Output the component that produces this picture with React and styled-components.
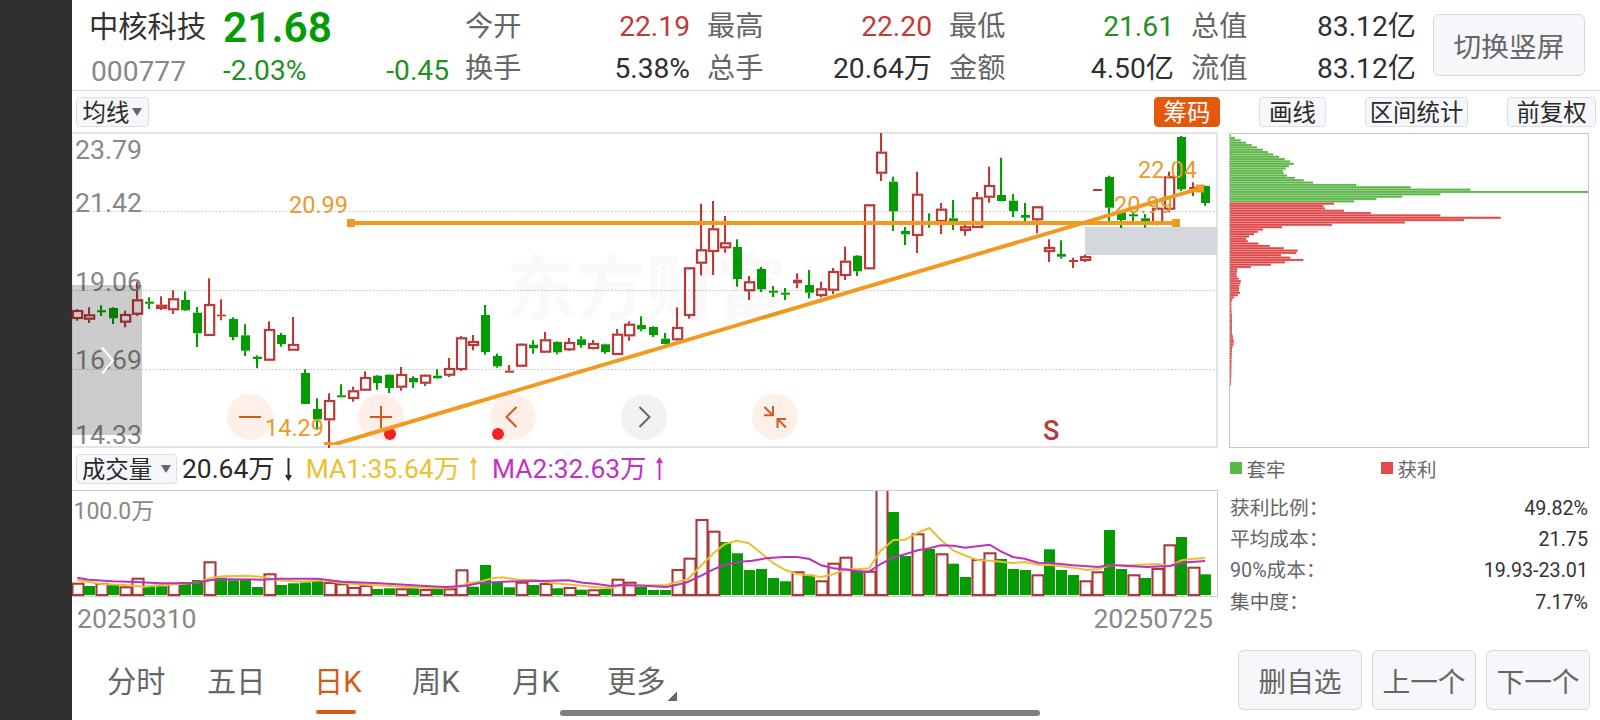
import React from "react";
import styled, { createGlobalStyle } from "styled-components";

const RED = "#b93a37";
const GREEN = "#049b04";
const ORANGE = "#f19a1f";
const STEP = 12;
const FIRST = 5;

// colour, high, body top, body bottom, low
const candles = [
  ["r", 177, 178, 187, 188.7], ["r", 175.3, 182.3, 187.7, 191], ["g", 173.3, 178.3, 180.3, 184],
  ["g", 175.3, 176, 186.3, 192], ["r", 178.7, 182, 190.7, 195.3], ["r", 150, 167.3, 182.7, 184],
  ["g", 165.3, 169.7, 171.7, 177], ["r", 164.3, 172.7, 177, 178], ["r", 158.3, 166.3, 178.3, 182],
  ["g", 159.3, 168, 178.3, 179], ["g", 175, 180.7, 201.3, 215], ["r", 146.3, 172, 204, 204],
  ["r", 167.3, 182.7, 184.3, 188.3], ["g", 185.3, 187, 205, 208.3], ["g", 192.3, 203.3, 218.7, 224],
  ["g", 223.3, 224.7, 227, 236.3], ["r", 189.3, 197, 228.7, 228.7], ["g", 201, 203, 212, 214.7],
  ["r", 185, 212, 218.7, 218.7], ["g", 237.3, 241, 272, 272], ["g", 266.3, 277, 287.3, 298],
  ["r", 261.3, 268, 288.3, 316], ["g", 252.3, 263.3, 265.3, 265.3], ["r", 254.7, 258.3, 267, 269.7],
  ["r", 239.3, 245, 258.7, 258.7], ["g", 243, 243.7, 251, 257.7], ["g", 242.3, 242.7, 256, 261],
  ["r", 235, 242, 255.7, 258.7], ["g", 244.3, 246, 250.3, 256], ["r", 242.3, 242.7, 251.7, 254],
  ["g", 237.3, 243.7, 246.3, 246.7], ["r", 226, 236, 243.7, 245], ["r", 204, 205.3, 238, 239],
  ["r", 203, 209, 214, 218.3], ["g", 173, 183, 220, 222.7], ["g", 221.7, 224, 234.3, 235.7],
  ["r", 233, 238.7, 240.7, 240.7], ["r", 211.3, 211.7, 234.7, 235], ["g", 208.3, 212.7, 216.3, 221.7],
  ["r", 200, 207.3, 220.7, 221], ["g", 209.3, 210, 220.3, 222.3], ["r", 206, 210, 218.3, 219],
  ["g", 204.3, 207.3, 213, 215.7], ["r", 208, 211, 217, 217.3], ["g", 211.7, 212.3, 220, 221.7],
  ["r", 197, 201.7, 223, 223], ["r", 189.3, 191.7, 204.3, 208.7], ["g", 184.3, 193, 197.3, 199.3],
  ["g", 194.3, 195, 203, 205], ["g", 201, 206.7, 212, 212.3], ["r", 175.3, 195, 208.3, 208.7],
  ["r", 135, 135.3, 184, 186.7], ["r", 71.7, 117.3, 131.7, 143.3], ["r", 69, 96.3, 120, 143],
  ["r", 84, 110.3, 116.3, 120.7], ["g", 107.3, 115, 147, 154.7], ["r", 144, 149.3, 159.3, 168],
  ["g", 135, 137, 157.3, 160], ["g", 154, 158.7, 160.7, 165], ["g", 156, 160.7, 162.7, 168],
  ["r", 141.3, 147.7, 151.3, 156.3], ["g", 138, 153, 160.7, 166.3], ["r", 149.7, 156.3, 164, 165.3],
  ["r", 136, 139, 158.7, 162], ["r", 114.7, 128.7, 144, 148], ["g", 123, 123.7, 139.3, 144],
  ["r", 72.3, 72.3, 137.3, 137.3], ["r", 1, 19.7, 41.7, 49], ["g", 44.7, 49.7, 79.3, 99],
  ["g", 95, 99, 102.3, 113], ["r", 39.7, 61.7, 104, 121], ["g", 81.3, 90, 92, 95.7],
  ["r", 71, 76.7, 90, 102], ["g", 68, 86.3, 91.3, 98], ["r", 89, 94.3, 99, 103.7],
  ["r", 60, 65.3, 96, 96], ["r", 34.7, 53, 65.7, 70.7], ["g", 25.7, 63, 69, 69.3],
  ["g", 62, 68.7, 79, 85], ["g", 71, 83, 85.7, 90.3], ["r", 74, 74.3, 88.3, 101.3],
  ["r", 107.3, 115, 120, 130], ["g", 108.3, 122, 124.7, 126.7], ["r", 125.7, 128, 130, 136],
  ["r", 122.7, 124, 129, 130], ["r", 57, 57, 59, 59], ["g", 43.7, 45, 75.7, 91.3],
  ["g", 79, 80.3, 88, 96], ["g", 80.3, 82.3, 84.3, 89.7], ["g", 82, 86.3, 90, 95.7],
  ["r", 73, 75.7, 92, 93.3], ["r", 39.7, 44.3, 77.7, 80.3], ["g", 4, 5, 57.3, 59],
  ["r", 50.3, 55, 57, 64], ["g", 53.7, 54, 71, 73.7],
];

const volumeColors =
  "rgrgrrggrggrggggrggg" + "grrrrggrgrgrrggggrgr" + "grgrgrrgggrrrrgggggg" +
  "rgrrrgrrggrgrggrrggg" + "rgggrrggrgrrgrg";

const volumeTops = [
  91.7, 95, 92, 93, 95.3, 86.7, 95.3, 95.3, 92, 91, 89, 70.3, 86.7, 89.3, 89, 96, 82.3, 94, 92.3, 91.3,
  90.3, 91, 92.3, 96, 94, 98, 97.3, 97.3, 97.3, 98, 98, 97.3, 78.3, 95.7, 74, 90.7, 96.3, 90.7, 94, 92,
  97.3, 96, 98.7, 98.3, 98, 87.7, 90.7, 96, 99, 99, 78, 66.7, 28, 39.7, 51, 62.3, 79, 78, 87, 90.3,
  80.3, 83.7, 89.3, 71.7, 65.7, 79.3, 79.7, -4, 21, 65, 42.3, 58, 62.3, 72.7, 86, 68, 61.3, 68, 78, 79,
  83.3, 58.3, 79, 84, 89.3, 80.3, 39, 78, 83.3, 87, 77, 53.3, 46, 75.7, 83.3,
];

const ma1 =
  "5.3,89 28.6,93 52.3,94 72,95.7 88,94 111.6,92.7 127.4,91.3 139.3,86.7 151.2,85.3 174.9,84.7 190.7,86 206.5,89.3 230.2,90.7 250,89 269.8,92 293.5,93.7 317.2,95 341,96.3 368.6,97.3 384.5,95.7 396.3,92.3 408.2,90.7 420,87.3 430,86.3 447.7,89 463.5,89 479.4,92 503,94 519,95.7 538.7,97.3 548,94.3 594.7,94 616,88 629.7,74 641.4,62.3 653,53 665,49.7 677,52.3 689.2,62.3 701.7,72.3 713.4,79 725,83 737.5,84.3 749.2,86 761.2,83.3 773.7,78.3 785.4,78.3 797,77.3 808.7,59.7 821.5,49 833.2,48.7 845.7,41.7 857.3,37 869,49 881.5,59.7 894.3,65 906,69 921.5,70 941,72 953.8,71 966,73.7 978,74 1001.3,76.7 1015,79 1025.8,78 1038.3,74.3 1061.6,74 1085.7,73 1097.8,75.3 1109.5,69.3 1122,67.7 1133.2,67";

const ma2 =
  "5.3,86.7 16.7,88.7 40.4,90.3 64.2,91 88,92.3 123.5,92 139.3,89 159,88.3 190.7,88.7 206.5,87.7 246,87.7 269.8,90.7 301.4,92 325,93.3 349,94.7 372.6,96 392.4,95 408.2,92 432,90.7 467.5,90 497,89.3 511,91.7 523,92.7 538.7,95 548,94 571.3,94.7 594.7,96 614,91.7 629.7,84.3 641.4,78.3 653,73.7 668.6,70.7 680.3,69.7 694,67.3 711.4,66 725,66 737.5,68 749.2,74.3 761.2,77.3 777.6,79 789.2,80.7 797,80.7 808.7,73 821.5,66.3 833.2,63.3 845.7,59.3 857.3,57.3 869,54.3 881.5,54.7 893,56.7 917.6,53.7 929.3,60.7 941,66 952.7,67.7 966,71.7 978,72 1001.3,74.3 1025.8,76 1038.3,74 1055.8,75 1075.2,76 1097.8,75 1109.5,71.7 1133.2,70";

const chipsAbove = [
  1, 5, 10.7, 16, 21.7, 27, 32.7, 38, 43.3, 49, 54.7, 60, 63.7, 59, 55.7, 52.7, 53.7, 57, 64.7, 73.7, 83,
  126.3, 180.7, 240.3, 358, 210.3, 172.3, 146.3, 124,
];

const chipsBelow = [
  104, 93.3, 95, 114, 141, 210.3, 270.7, 234, 175, 102, 52, 33, 27.7, 24, 19, 16, 17.7, 28.3, 39.7, 53.7,
  67.7, 66.3, 51, 60.3, 73.3, 55, 41, 21, 7.3, 7, 6.3, 7, 8.7, 10.7, 10.3, 9.3, 9, 9, 10, 7.7, 4, 2.3, 1.3,
  1.3, 1.3, 1.3, 1.5, 1.7, 2, 2, 2, 2, 2, 2, 2, 2, 2.5, 3, 3.5, 3.8, 3.5, 2.5, 2, 2, 1.8, 1.6, 1.6, 1.5, 1.5,
  1.4, 1.4, 1.3, 1.3, 1.2, 1.2, 1, 1, 1,
];

const quotes = [
  ["今开", "22.19", "#c13b38"], ["最高", "22.20", "#c13b38"], ["最低", "21.61", "#1f911f"], ["总值", "83.12亿"],
  ["换手", "5.38%"], ["总手", "20.64万"], ["金额", "4.50亿"], ["流值", "83.12亿"],
];

const stats = [
  ["获利比例：", "49.82%"],
  ["平均成本：", "21.75"],
  ["90%成本：", "19.93-23.01"],
  ["集中度：", "7.17%"],
];

const tabs = [
  ["分时", 100], ["五日", 107], ["日K", 98], ["周K", 100], ["月K", 95], ["更多", 80],
];

function Candle({ index, data }) {
  const [color, high, top, bottom, low] = data;
  const x = FIRST + index * STEP;
  const fill = color === "r" ? RED : GREEN;
  const hollow = color === "r" && bottom - top > 4;
  return (
    <g>
      {high < top && <rect x={x - 1} y={high} width="2.1" height={top - high} fill={fill} />}
      {low > bottom && <rect x={x - 1} y={bottom} width="2.1" height={low - bottom} fill={fill} />}
      {hollow ? (
        <rect x={x - 4} y={top + 1} width="9.2" height={bottom - top - 2} fill="none" stroke={fill} strokeWidth="2.2" />
      ) : (
        <rect x={x - 4} y={top} width="9" height={bottom - top} fill={fill} />
      )}
    </g>
  );
}

function VolumeBar({ index, top }) {
  const x = FIRST + index * STEP;
  if (volumeColors[index] === "g") {
    return <rect x={x - 5} y={top} width="11" height={104 - top} fill={GREEN} />;
  }
  return (
    <rect x={x - 4.5} y={top + 1} width="11" height={103 - top} fill="#fff" stroke="#a83a37" strokeWidth="2.1" />
  );
}

function PriceChart() {
  return (
    <PricePanel>
      <Controls>
        <RoundButton><svg width="46" height="46"><path d="M12 23h22" /></svg></RoundButton>
        <RoundButton><svg width="46" height="46"><path d="M12 23h22M23 12v22" /></svg></RoundButton>
        <RoundButton><svg width="46" height="46"><path d="M26.5 13L16.5 23L26.5 33" /></svg></RoundButton>
        <RoundButton $gray><svg width="46" height="46"><path d="M18.5 13L28.5 23L18.5 33" /></svg></RoundButton>
        <RoundButton>
          <svg width="46" height="46"><path d="M12.5 13L21 21.5M21 12V21.3H12M34 33.5L25.5 25M25.5 34V25H34" /></svg>
        </RoundButton>
      </Controls>
      <Canvas width="1146" height="316" viewBox="0 0 1146 316">
        <g stroke="#cfcfcf" strokeDasharray="2 1.5">
          <path d="M0 79.5H1146M0 158.5H1146M0 237.5H1146" />
        </g>
        <rect x="1013" y="95" width="132" height="28" fill="#d4d7dc" />
        {candles.map((data, i) => <Candle key={i} index={i} data={data} />)}
        <circle cx="318" cy="302" r="6" fill="#f02420" />
        <circle cx="426" cy="302" r="6" fill="#f02420" />
        <clipPath id="drawArea"><rect width="1146" height="313" /></clipPath>
        <g clipPath="url(#drawArea)" stroke={ORANGE} strokeWidth="4" fill={ORANGE}>
          <path d="M279 91H1104M256 314.2L1128 56.3" />
          <path d="M275 91h8M1100 91h8M252 314h8M1124 56.5h8" strokeWidth="8" />
        </g>
        <AxisText>
          <text x="3" y="27">23.79</text>
          <text x="3" y="80">21.42</text>
          <text x="3" y="159">19.06</text>
          <text x="3" y="237">16.69</text>
          <text x="3" y="312">14.33</text>
        </AxisText>
        <MarkText>
          <text x="217" y="81">20.99</text>
          <text x="193" y="303.7">14.29</text>
          <text x="1066" y="46">22.04</text>
          <text x="1042" y="81">20.99</text>
        </MarkText>
        <Signal x="971" y="308">S</Signal>
        <rect y="153" width="70" height="150" fill="rgba(0,0,0,.2)" />
        <path d="M30 215.5L41 228.5L30 241.5" fill="none" stroke="#fff" strokeWidth="2" />
      </Canvas>
      <Watermark>东方财富</Watermark>
    </PricePanel>
  );
}

function VolumeChart() {
  return (
    <VolumePanel>
      <svg width="1146" height="106" viewBox="0 0 1146 106">
        <VolumeLabel x="1.5" y="27.5">100.0万</VolumeLabel>
        {volumeTops.map((top, i) => <VolumeBar key={i} index={i} top={top} />)}
        <polyline points={ma1} fill="none" stroke="#e8bf35" strokeWidth="2" />
        <polyline points={ma2} fill="none" stroke="#bb32bd" strokeWidth="2" />
      </svg>
    </VolumePanel>
  );
}

function ChipChart() {
  return (
    <ChipPanel>
      <svg width="358" height="314" viewBox="0 0 358 314">
        {[...chipsAbove, ...chipsBelow].map((width, i) => (
          <g key={i} fill={i < chipsAbove.length ? "#5bb548" : "#e04848"}>
            <rect y={0.6 + i * 2.345} width={width} height="2.345" opacity="0.45" />
            <rect y={0.8 + i * 2.345} width={width} height="1.7" />
          </g>
        ))}
      </svg>
    </ChipPanel>
  );
}

function Arrow({ down }) {
  return (
    <svg width="9" height="24" viewBox="0 0 9 24">
      <path
        d={down ? "M4.5 1V22M2 18L4.5 22L7 18" : "M4.5 23V2M2 6L4.5 2L7 6"}
        fill="none"
        stroke="currentColor"
        strokeWidth="2"
      />
    </svg>
  );
}

export default function App() {
  return (
    <Screen>
      <GlobalStyle />
      <CutoutBar />
      <Page>
        <Header>
          <Stock>
            <Name>中核科技</Name>
            <Code>000777</Code>
          </Stock>
          <Price>
            <Last>21.68</Last>
            <Change>
              <span>-2.03%</span>
              <span>-0.45</span>
            </Change>
          </Price>
          <QuoteGrid>
            {quotes.map(([label, value, color]) => (
              <Quote key={label}>
                <span>{label}</span>
                <QuoteValue $color={color}>{value}</QuoteValue>
              </Quote>
            ))}
          </QuoteGrid>
          <Button $width={152} $height={62}>切换竖屏</Button>
        </Header>

        <Toolbar>
          <SmallButton $width={73}>均线<Caret /></SmallButton>
          <Spacer />
          <SmallButton $width={66} $active>筹码</SmallButton>
          <SmallButton $width={67} $left={39}>画线</SmallButton>
          <SmallButton $width={103} $left={39}>区间统计</SmallButton>
          <SmallButton $width={89} $left={39}>前复权</SmallButton>
        </Toolbar>

        <Body>
          <Charts>
            <PriceChart />
            <Indicator>
              <SmallButton $width={101}>成交量<Caret $left={9} /></SmallButton>
              <Reading $left={5}>20.64万<Arrow down /></Reading>
              <Reading $left={13} $color="#ecc12f">MA1:35.64万<Arrow /></Reading>
              <Reading $left={14} $color="#c52fc8">MA2:32.63万<Arrow /></Reading>
            </Indicator>
            <VolumeChart />
            <Dates>
              <span>20250310</span>
              <span>20250725</span>
            </Dates>
          </Charts>
          <Side>
            <ChipChart />
            <Legend>
              <LegendItem $color="#58b947">套牢</LegendItem>
              <LegendItem $color="#e34a4a">获利</LegendItem>
            </Legend>
            <Stats>
              {stats.map(([label, value]) => (
                <Stat key={label}>
                  <span>{label}</span>
                  <b>{value}</b>
                </Stat>
              ))}
            </Stats>
          </Side>
        </Body>

        <Footer>
          <Tabs>
            {tabs.map(([label, width]) => (
              <Tab key={label} $width={width} $active={label === "日K"}>
                {label}
                {label === "更多" && <Corner />}
              </Tab>
            ))}
          </Tabs>
          <Actions>
            <Button $width={124} $height={60}>删自选</Button>
            <Button $width={104} $height={60}>上一个</Button>
            <Button $width={104} $height={60}>下一个</Button>
          </Actions>
          <HomeBar />
        </Footer>
      </Page>
    </Screen>
  );
}

const GlobalStyle = createGlobalStyle`
  * {
    box-sizing: border-box;
  }

  body {
    margin: 0;
    background: #fff;
    font-family: Roboto, "Noto Sans CJK SC", sans-serif;
  }

  svg {
    display: block;
  }
`;

const Screen = styled.div`
  display: flex;
  width: 1600px;
  height: 720px;
  overflow: hidden;
`;

const CutoutBar = styled.div`
  width: 72px;
  background: #303030;
`;

const Page = styled.div`
  display: flex;
  flex-direction: column;
  width: 1528px;
`;

const Header = styled.header`
  display: flex;
  height: 91px;
  padding: 6px 0 0 17px;
  border-bottom: 1px solid #d8d8d8;
  font-size: 28.2px;
  line-height: 42px;
  white-space: nowrap;

  > button {
    margin: 8px 0 0 17px;
  }
`;

const Stock = styled.div`
  width: 134px;
`;

const Name = styled.div`
  color: #333;
  font-size: 29.3px;
`;

const Code = styled.div`
  padding: 3px 0 0 2px;
  color: #888;
`;

const Price = styled.div`
  width: 226px;
`;

const Last = styled.div`
  color: ${GREEN};
  font-size: 42.4px;
  font-weight: 600;
  line-height: 43px;
`;

const Change = styled.div`
  display: flex;
  justify-content: space-between;
  color: #1f911f;
  line-height: 43px;
`;

const QuoteGrid = styled.div`
  display: grid;
  grid-template-columns: repeat(4, 225px);
  grid-auto-rows: 42px;
  column-gap: 17px;
  margin-left: 16px;
`;

const Quote = styled.div`
  display: flex;
  justify-content: space-between;
  color: #666;
`;

const QuoteValue = styled.span`
  color: ${(p) => p.$color || "#2f2f2f"};
`;

const Button = styled.button`
  width: ${(p) => p.$width}px;
  height: ${(p) => p.$height}px;
  padding: 0;
  border: 1px solid #d6d9de;
  border-radius: 6px;
  background: #f6f7fa;
  color: #666;
  font: 27.7px Roboto, "Noto Sans CJK SC", sans-serif;
  white-space: nowrap;
`;

const Toolbar = styled.div`
  display: flex;
  height: 41px;
  padding: 6px 4px 0 4px;
`;

const Spacer = styled.div`
  flex: 1;
`;

const SmallButton = styled.button`
  display: flex;
  align-items: center;
  justify-content: center;
  width: ${(p) => p.$width}px;
  height: 30px;
  margin-left: ${(p) => p.$left || 0}px;
  padding: 0 0 2px;
  border: 1px solid ${(p) => (p.$active ? "#e4580e" : "#dcdee2")};
  border-radius: 4px;
  background: ${(p) => (p.$active ? "#e4580e" : "#f6f7fa")};
  color: ${(p) => (p.$active ? "#fff" : "#2a2a2a")};
  font: 23.4px Roboto, "Noto Sans CJK SC", sans-serif;
  white-space: nowrap;
`;

const Caret = styled.i`
  margin: 2px 0 0 ${(p) => p.$left || 3}px;
  border: 5px solid transparent;
  border-top: 8px solid #666;
  border-bottom: 0;
`;

const Body = styled.main`
  display: flex;
  height: 510px;
`;

const Charts = styled.section`
  width: 1146px;
`;

const PricePanel = styled.div`
  position: relative;
  height: 316px;
  box-shadow: inset 1px 0 #eee, inset -2px 0 #e3e3e3, inset 0 2px #e3e3e3, inset 0 -2px #e3e3e3;
`;

const Canvas = styled.svg`
  position: relative;
  overflow: visible;
`;

const Controls = styled.div`
  position: absolute;
  left: 155px;
  top: 262px;
  display: flex;
  gap: 85.3px;
`;

const RoundButton = styled.div`
  width: 46px;
  height: 46px;
  border-radius: 50%;
  background: ${(p) => (p.$gray ? "#f2f2f2" : "#fef0e9")};

  path {
    fill: none;
    stroke: ${(p) => (p.$gray ? "#666" : "#cf5a20")};
    stroke-width: 2;
  }
`;

const Watermark = styled.div`
  position: absolute;
  left: 434px;
  top: 108px;
  color: rgba(0, 0, 0, 0.025);
  font-size: 70px;
  font-weight: 700;
  line-height: 100px;
`;

const AxisText = styled.g`
  fill: #888;
  font-size: 26.7px;
`;

const MarkText = styled.g`
  fill: #e99a2c;
  font-size: 23.5px;
`;

const Signal = styled.text`
  fill: ${RED};
  font-size: 27px;
  font-weight: 500;
`;

const Indicator = styled.div`
  display: flex;
  align-items: center;
  height: 42px;
  padding-left: 4px;
`;

const Reading = styled.div`
  display: flex;
  align-items: center;
  gap: 9px;
  margin-left: ${(p) => p.$left}px;
  color: ${(p) => p.$color || "#2a2a2a"};
  font-size: 26.4px;
  line-height: 40px;
`;

const VolumePanel = styled.div`
  height: 107px;
  border: solid #ccc;
  border-width: 1px 1px 1px 0;
`;

const VolumeLabel = styled.text`
  fill: #888;
  font-size: 23px;
`;

const Dates = styled.div`
  display: flex;
  justify-content: space-between;
  padding: 1px 5px 0;
  color: #888;
  font-size: 26.6px;
  line-height: 42px;
`;

const Side = styled.aside`
  width: 360px;
  margin-left: 11px;
`;

const ChipPanel = styled.div`
  height: 315px;
  margin-top: 1px;
  border: 1px solid #c8c8c8;
`;

const Legend = styled.div`
  display: flex;
  height: 40px;
  padding-left: 1px;
`;

const LegendItem = styled.div`
  display: flex;
  align-items: center;
  gap: 4.5px;
  width: 151px;
  color: #666;
  font-size: 19.5px;

  &::before {
    content: "";
    width: 12px;
    height: 12px;
    background: ${(p) => p.$color};
  }
`;

const Stats = styled.div`
  padding: 4.5px 1px 0 1px;
`;

const Stat = styled.div`
  display: flex;
  justify-content: space-between;
  height: 31.4px;
  color: #666;
  font-size: 19.7px;
  line-height: 31.4px;

  b {
    color: #333;
    font-weight: 400;
  }
`;

const Footer = styled.footer`
  position: relative;
  display: flex;
  justify-content: space-between;
  height: 78px;
  padding: 8px 10px 0 35px;
`;

const Tabs = styled.nav`
  display: flex;
`;

const Tab = styled.div`
  position: relative;
  width: ${(p) => p.$width}px;
  height: 64px;
  color: ${(p) => (p.$active ? "#d65a17" : "#666")};
  font-size: 29.2px;
  line-height: 65px;

  &::after {
    content: "";
    display: ${(p) => (p.$active ? "block" : "none")};
    position: absolute;
    left: 2px;
    bottom: 0;
    width: 40px;
    height: 4px;
    border-radius: 2px;
    background: #d65a17;
  }
`;

const Corner = styled.i`
  position: absolute;
  left: 60px;
  top: 41px;
  width: 10px;
  height: 10px;
  background: linear-gradient(135deg, transparent 50%, #666 50%);
`;

const Actions = styled.div`
  display: flex;
  gap: 10px;
`;

const HomeBar = styled.div`
  position: absolute;
  left: 488px;
  bottom: 4px;
  width: 480px;
  height: 6px;
  border-radius: 3px;
  background: #808080;
`;
